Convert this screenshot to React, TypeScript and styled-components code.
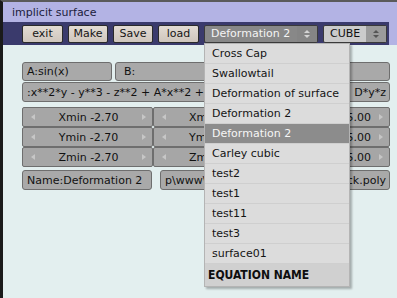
import styled, { createGlobalStyle } from 'styled-components';

const GlobalStyle = createGlobalStyle`
  html, body {
    margin: 0;
    padding: 0;
    background: #e3efef;
  }
`;

const Window = styled.div`
  position: relative;
  width: 397px;
  height: 298px;
  box-sizing: border-box;
  overflow: hidden;
  background: #e3efef;
  border-left: 3px solid #1a1a1a;
  border-top: 2px solid #5a5a5a;
  font-family: "DejaVu Sans", sans-serif;
  font-size: 11px;
  color: #111;
`;

const Header = styled.div`
  background: #b3b3e4;
`;

const TitleBar = styled.div`
  height: 20px;
  display: flex;
  align-items: center;
  padding-left: 9px;
  color: #1c1c3c;
`;

const Toolbar = styled.div`
  height: 23px;
  margin-right: 8px;
  background: #3a3a6c;
  display: flex;
  align-items: center;
  gap: 5px;
  padding-left: 19px;
`;

const ToolButton = styled.div<{ $w: number }>`
  width: ${(p) => p.$w}px;
  height: 18px;
  box-sizing: border-box;
  display: flex;
  align-items: center;
  justify-content: center;
  border: 1px solid #2a2a2a;
  border-radius: 2px;
  background: linear-gradient(#e2dbd3, #cfc6bd);
  color: #151515;
`;

const Select = styled.div<{ $w: number; $dark?: boolean }>`
  width: ${(p) => p.$w}px;
  height: 18px;
  box-sizing: border-box;
  display: flex;
  align-items: center;
  border: 1px solid #3a3a3a;
  border-radius: 2px;
  overflow: hidden;
  background: ${(p) => (p.$dark ? '#888888' : '#cbcbcb')};
  color: ${(p) => (p.$dark ? '#f4f4f4' : '#111')};
`;

const SelectLabel = styled.span`
  flex: 1;
  padding-left: 6px;
  white-space: nowrap;
`;

const SelectArrows = styled.span<{ $dark?: boolean }>`
  width: 20px;
  height: 100%;
  display: flex;
  flex-direction: column;
  align-items: center;
  justify-content: center;
  gap: 2px;
  background: ${(p) => (p.$dark ? '#858585' : '#9b9b9b')};
`;

const Tri = styled.span<{ $dir: 'up' | 'down' | 'left' | 'right'; $color: string }>`
  width: 0;
  height: 0;
  ${(p) =>
    p.$dir === 'up'
      ? `border-left: 3px solid transparent; border-right: 3px solid transparent; border-bottom: 3px solid ${p.$color};`
      : p.$dir === 'down'
      ? `border-left: 3px solid transparent; border-right: 3px solid transparent; border-top: 3px solid ${p.$color};`
      : p.$dir === 'left'
      ? `border-top: 3.5px solid transparent; border-bottom: 3.5px solid transparent; border-right: 4px solid ${p.$color};`
      : `border-top: 3.5px solid transparent; border-bottom: 3.5px solid transparent; border-left: 4px solid ${p.$color};`}
`;

const Panel = styled.div`
  padding: 17px 0 0 19px;
  width: 368px;
  display: flex;
  flex-direction: column;
`;

const Row = styled.div<{ $gap?: number; $mt?: number }>`
  display: flex;
  gap: ${(p) => p.$gap ?? 0}px;
  margin-top: ${(p) => p.$mt ?? 0}px;
`;

const RangeBlock = styled.div`
  display: flex;
  flex-direction: column;
  margin-top: 5px;
`;

const Field = styled.div<{ $w?: number; $pl?: number; $h?: number }>`
  ${(p) => (p.$w ? `width: ${p.$w}px;` : 'flex: 1;')}
  height: ${(p) => p.$h ?? 20}px;
  box-sizing: border-box;
  display: flex;
  align-items: center;
  justify-content: space-between;
  padding: 0 3px 0 ${(p) => p.$pl ?? 4}px;
  border: 1px solid #6e6e6e;
  border-radius: 3px;
  background: #a9a9a9;
  white-space: nowrap;
  overflow: hidden;
`;

const NumCell = styled.div<{ $w?: number }>`
  ${(p) => (p.$w ? `width: ${p.$w}px;` : 'flex: 1;')}
  height: 20px;
  box-sizing: border-box;
  display: flex;
  align-items: center;
  padding: 0 6px 0 8px;
  border: 1px solid #6e6e6e;
  border-radius: 2px;
  background: #a6a6a6;
  white-space: nowrap;
`;

const NumText = styled.span<{ $spread?: boolean }>`
  flex: 1;
  display: flex;
  justify-content: ${(p) => (p.$spread ? 'space-between' : 'center')};
  padding: ${(p) => (p.$spread ? '0 8px 0 23px' : '0')};
`;

const Menu = styled.div`
  position: absolute;
  left: 201px;
  top: 41px;
  width: 146px;
  box-sizing: border-box;
  background: #dcdcdc;
  border: 1px solid #b4b4b4;
  box-shadow: 2px 2px 2px rgba(0, 0, 0, 0.28);
`;

const MenuItem = styled.div<{ $active?: boolean }>`
  height: 20px;
  box-sizing: border-box;
  display: flex;
  align-items: center;
  padding-left: 7px;
  border-bottom: 1px solid #cfcfcf;
  background: ${(p) => (p.$active ? '#8c8c8c' : 'transparent')};
  color: ${(p) => (p.$active ? '#f6f6f6' : '#141414')};
  white-space: nowrap;
`;

const MenuTitle = styled.div`
  height: 22px;
  display: flex;
  align-items: center;
  padding-left: 3px;
  background: #d0d0d0;
  font-family: "DejaVu Sans Condensed", "DejaVu Sans", sans-serif;
  font-weight: bold;
  font-size: 12px;
  color: #0e0e0e;
`;

const ranges = [
  { a: 'Xmin', b: 'Xmax' },
  { a: 'Ymin', b: 'Ymax' },
  { a: 'Zmin', b: 'Zmax' },
];

const menuItems = [
  'Cross Cap',
  'Swallowtail',
  'Deformation of surface',
  'Deformation 2',
  'Deformation 2',
  'Carley cubic',
  'test2',
  'test1',
  'test11',
  'test3',
  'surface01',
];

export default function App() {
  return (
    <>
      <GlobalStyle />
      <Window>
        <Header>
          <TitleBar>implicit surface</TitleBar>
          <Toolbar>
            <ToolButton $w={41}>exit</ToolButton>
            <ToolButton $w={40}>Make</ToolButton>
            <ToolButton $w={40}>Save</ToolButton>
            <ToolButton $w={41}>load</ToolButton>
            <Select $w={114} $dark>
              <SelectLabel>Deformation 2</SelectLabel>
              <SelectArrows $dark>
                <Tri $dir="up" $color="#d4d4d4" />
                <Tri $dir="down" $color="#d4d4d4" />
              </SelectArrows>
            </Select>
            <Select $w={64}>
              <SelectLabel>CUBE</SelectLabel>
              <SelectArrows>
                <Tri $dir="up" $color="#555" />
                <Tri $dir="down" $color="#555" />
              </SelectArrows>
            </Select>
          </Toolbar>
        </Header>

        <Panel>
          <Row $gap={3}>
            <Field $w={90} $h={19}>A:sin(x)</Field>
            <Field $pl={8} $h={19}>B:</Field>
          </Row>
          <Row $mt={1}>
            <Field>
              <span>:x**2*y - y**3 - z**2 + A*x**2 +</span>
              <span>D*y*z</span>
            </Field>
          </Row>
          <RangeBlock>
            {ranges.map((r) => (
              <Row key={r.a}>
                <NumCell $w={131}>
                  <Tri $dir="left" $color="#c6c6c6" />
                  <NumText>{r.a} -2.70</NumText>
                  <Tri $dir="right" $color="#c6c6c6" />
                </NumCell>
                <NumCell>
                  <Tri $dir="left" $color="#c6c6c6" />
                  <NumText $spread>
                    <span>{r.b}</span>
                    <span>5.00</span>
                  </NumText>
                  <Tri $dir="right" $color="#c6c6c6" />
                </NumCell>
              </Row>
            ))}
          </RangeBlock>
          <Row $gap={8} $mt={3}>
            <Field $w={130}>Name:Deformation 2</Field>
            <Field>
              <span>p\www\</span>
              <span>block.poly</span>
            </Field>
          </Row>
        </Panel>

        <Menu>
          {menuItems.map((m, i) => (
            <MenuItem key={i} $active={i === 4}>
              {m}
            </MenuItem>
          ))}
          <MenuTitle>EQUATION NAME</MenuTitle>
        </Menu>
      </Window>
    </>
  );
}
